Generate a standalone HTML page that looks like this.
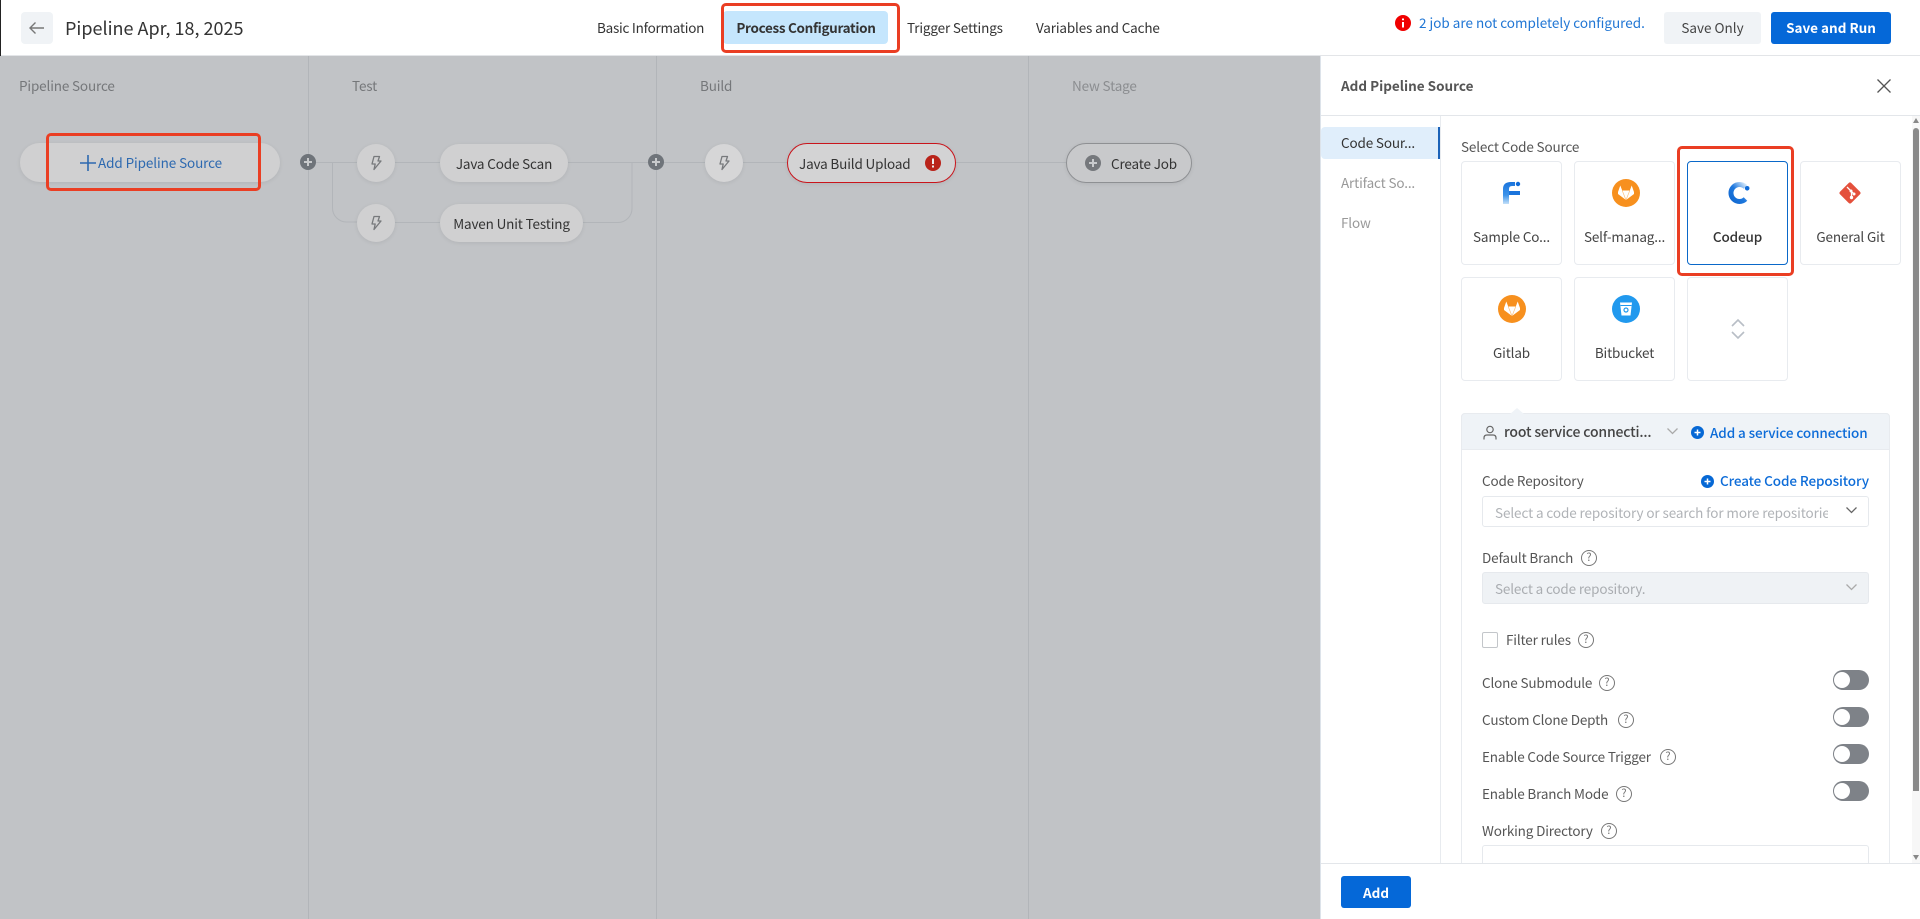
<!DOCTYPE html>
<html><head><meta charset="utf-8">
<style>
*{box-sizing:border-box}
html,body{margin:0;padding:0;width:1920px;height:919px;overflow:hidden;background:#c1c3c6;font-family:"Noto Sans CJK SC","Liberation Sans",sans-serif;font-size:13.5px;letter-spacing:-.15px;color:#333}
.a{position:absolute}
.t{position:absolute;white-space:nowrap;line-height:20px;height:20px;margin-top:-1px}
.b{font-weight:700;letter-spacing:0}
.pill{position:absolute;background:#d0d0d1;border-radius:20px;box-shadow:0 1px 4px rgba(0,0,0,.08)}
.card{position:absolute;width:101px;height:104px;border:1px solid #e8ebef;border-radius:4px;background:#fff}
.lbl{position:absolute;left:0;right:0;text-align:center;color:#444;line-height:20px;white-space:nowrap}
.red{position:absolute;border:3px solid #ea3e23;border-radius:5px}
.tog{position:absolute;left:1833px;width:36px;height:20px;border-radius:10px;background:#7e8288}
.tog:after{content:"";position:absolute;left:1px;top:2px;width:16px;height:16px;border-radius:50%;background:#fff}
svg{position:absolute;overflow:visible}
.hp{position:absolute;width:16px;height:16px;border:1.4px solid #777;border-radius:50%;color:#777;font-size:11px;line-height:13px;text-align:center;letter-spacing:0}
</style></head><body>

<!-- canvas lines -->
<svg class="a" style="left:0;top:0" width="1320" height="919" fill="none" stroke="#b2b5b9" stroke-width="1">
<path d="M308.5 56V919M656.5 56V919M1028.5 56V919"/>
<path d="M316 162.5H357M395 162.5H440M568 162.5H648M664 162.5H705M743 162.5H787M955 162.5H1067"/>
<path d="M332.5 162V208a14 14 0 0 0 14 14H357M395 222.5H440M582 222.5H618a14 14 0 0 0 14-14V162"/>
</svg>

<!-- stage labels -->
<div class="t" style="left:19px;top:76px;color:#75777a">Pipeline Source</div>
<div class="t" style="left:352px;top:76px;color:#75777a">Test</div>
<div class="t" style="left:700px;top:76px;color:#75777a">Build</div>
<div class="t" style="left:1072px;top:76px;color:#8b8d90">New Stage</div>

<!-- add pipeline source -->
<div class="pill" style="left:20px;top:143px;width:260px;height:39px"></div>
<svg style="left:80px;top:155px" width="16" height="16" fill="none" stroke="#2d69b0" stroke-width="1.6"><path d="M0 8H16M8 0V16"/></svg>
<div class="t" style="left:98px;top:153px;color:#2d69b0;letter-spacing:-.1px">Add Pipeline Source</div>
<div class="red" style="left:46px;top:133px;width:215px;height:58px"></div>

<!-- plus nodes -->
<svg style="left:300px;top:154px" width="16" height="16"><circle cx="8" cy="8" r="8" fill="#6f747a"/><path d="M4 8H12M8 4V12" stroke="#c8cacc" stroke-width="2"/></svg>
<svg style="left:648px;top:154px" width="16" height="16"><circle cx="8" cy="8" r="8" fill="#6f747a"/><path d="M4 8H12M8 4V12" stroke="#c8cacc" stroke-width="2"/></svg>

<!-- lightning nodes -->
<div class="pill" style="left:357px;top:144px;width:38px;height:38px"></div>
<svg style="left:368px;top:155px" width="16" height="16" fill="none" stroke="#77797c" stroke-width="1.3"><path d="M6 1.5H11.5L10 6H13L6 14.5L7.2 9H4Z" stroke-linejoin="round"/></svg>
<div class="pill" style="left:357px;top:204px;width:38px;height:38px"></div>
<svg style="left:368px;top:215px" width="16" height="16" fill="none" stroke="#77797c" stroke-width="1.3"><path d="M6 1.5H11.5L10 6H13L6 14.5L7.2 9H4Z" stroke-linejoin="round"/></svg>
<div class="pill" style="left:705px;top:144px;width:38px;height:38px;background:#d6d6d7"></div>
<svg style="left:716px;top:155px" width="16" height="16" fill="none" stroke="#77797c" stroke-width="1.3"><path d="M6 1.5H11.5L10 6H13L6 14.5L7.2 9H4Z" stroke-linejoin="round"/></svg>

<!-- job pills -->
<div class="pill" style="left:440px;top:144px;width:128px;height:38px"></div>
<div class="t" style="left:440px;width:128px;text-align:center;top:154px">Java Code Scan</div>
<div class="pill" style="left:440px;top:204px;width:143px;height:38px"></div>
<div class="t" style="left:440px;width:143px;text-align:center;top:214px">Maven Unit Testing</div>
<div class="pill" style="left:787px;top:143px;width:169px;height:40px;border:1px solid #c9141b;background:#d3d3d4"></div>
<div class="t" style="left:799px;top:154px">Java Build Upload</div>
<svg style="left:925px;top:155px" width="16" height="16"><circle cx="8" cy="8" r="8" fill="#b9231a"/><path d="M8 3.5V9" stroke="#eee" stroke-width="2"/><path d="M8 10.5V12.5" stroke="#eee" stroke-width="2"/></svg>
<div class="pill" style="left:1066px;top:143px;width:126px;height:40px;border:1px solid #8e9093;background:#c8c9cb"></div>
<svg style="left:1085px;top:155px" width="16" height="16"><circle cx="8" cy="8" r="8" fill="#75787c"/><path d="M4 8H12M8 4V12" stroke="#c8cacc" stroke-width="2"/></svg>
<div class="t" style="left:1111px;top:154px">Create Job</div>

<!-- header -->
<div class="a" style="left:0;top:0;width:1920px;height:56px;background:#fff;border-bottom:1px solid #e3e5e8"></div>
<div class="a" style="left:0;top:0;width:1px;height:56px;background:#222"></div>
<div class="a" style="left:21px;top:12px;width:32px;height:32px;background:#f0f3f6;border-radius:4px"></div>
<svg style="left:29px;top:20px" width="16" height="16" fill="none" stroke="#777" stroke-width="1.4"><path d="M1 8H15M6.5 2.5L1 8L6.5 13.5"/></svg>
<div class="t" style="left:65px;top:15px;height:26px;line-height:26px;font-size:18px;letter-spacing:0;color:#333;margin-top:0">Pipeline Apr, 18, 2025</div>

<div class="t" style="left:597px;top:18px;letter-spacing:-.25px">Basic Information</div>
<div class="a" style="left:723px;top:11px;width:165px;height:33px;background:#c5e6fd;border-radius:4px"></div>
<div class="t b" style="left:724px;width:164px;text-align:center;top:18px;letter-spacing:-.32px;color:#333">Process Configuration</div>
<div class="red" style="left:721px;top:3px;width:179px;height:50px"></div>
<div class="t" style="left:907px;top:18px">Trigger Settings</div>
<div class="t" style="left:1036px;top:18px">Variables and Cache</div>

<svg style="left:1395px;top:15px" width="16" height="16"><circle cx="8" cy="8" r="8" fill="#f00000"/><path d="M8 3.5V5.3M8 7V12.5" stroke="#fff" stroke-width="2"/></svg>
<div class="t" style="left:1419px;top:13px;color:#2076d4;letter-spacing:0">2 job are not completely configured.</div>
<div class="a" style="left:1664px;top:12px;width:97px;height:32px;background:#f0f3f6;border-radius:3px"></div>
<div class="t" style="left:1664px;width:97px;text-align:center;top:18px;color:#444;letter-spacing:0">Save Only</div>
<div class="a" style="left:1771px;top:12px;width:120px;height:32px;background:#0568d8;border-radius:3px"></div>
<div class="t b" style="left:1771px;width:120px;text-align:center;top:18px;color:#fff">Save and Run</div>

<!-- side panel -->
<div class="a" style="left:1320px;top:56px;width:600px;height:863px;background:#fff;border-left:1px solid #dde3ea"></div>
<div class="t b" style="left:1341px;top:76px;color:#555">Add Pipeline Source</div>
<svg style="left:1877px;top:79px" width="14" height="14" fill="none" stroke="#555" stroke-width="1.3"><path d="M0.5 0.5L13.5 13.5M13.5 0.5L0.5 13.5"/></svg>
<div class="a" style="left:1321px;top:115px;width:599px;height:1px;background:#e3e6ea"></div>
<div class="a" style="left:1440px;top:116px;width:1px;height:748px;background:#e8ebef"></div>

<div class="a" style="left:1321px;top:127px;width:119px;height:32px;background:#e0eefb;border-right:2px solid #1b62b8;border-radius:4px 0 0 4px"></div>
<div class="t" style="left:1341px;top:133px;color:#333">Code Sour...</div>
<div class="t" style="left:1341px;top:173px;color:#999">Artifact So...</div>
<div class="t" style="left:1341px;top:213px;color:#999">Flow</div>

<div class="t" style="left:1461px;top:137px;color:#555">Select Code Source</div>

<div class="card" style="left:1461px;top:161px"><div class="lbl" style="top:64px">Sample Co...</div></div>
<div class="card" style="left:1574px;top:161px"><div class="lbl" style="top:64px">Self-manag...</div></div>
<div class="card" style="left:1687px;top:161px;border-color:#0a68c9"><div class="lbl" style="top:64px;font-weight:500;color:#333">Codeup</div></div>
<div class="card" style="left:1800px;top:161px"><div class="lbl" style="top:64px">General Git</div></div>
<div class="card" style="left:1461px;top:277px"><div class="lbl" style="top:64px">Gitlab</div></div>
<div class="card" style="left:1574px;top:277px"><div class="lbl" style="top:64px">Bitbucket</div></div>
<div class="card" style="left:1687px;top:277px"></div>
<div class="red" style="left:1677px;top:146px;width:117px;height:130px"></div>

<!-- F logo -->
<svg style="left:1502px;top:181px" width="20" height="24"><defs><linearGradient id="f" x1="0" y1="0" x2="0" y2="1"><stop offset="0" stop-color="#1a74dc"/><stop offset=".6" stop-color="#3d93ea"/><stop offset="1" stop-color="#c4e0f8"/></linearGradient></defs><path d="M1 23V8Q1 1 9 1H13V5H10Q7 5 7 8V23Z" fill="url(#f)"/><path d="M7 10H18V14H7Z" fill="#1a74dc"/><circle cx="16" cy="3" r="2.2" fill="#0f6bd8"/></svg>
<!-- gitlab self -->
<svg style="left:1612px;top:179px" width="28" height="28"><circle cx="14" cy="14" r="14" fill="#f7901e"/><path d="M6 13L8.300 6.500L10.200 11.500H17.800L19.700 6.500L22 13V15L14 21L6 15Z" fill="#fff"/><path d="M10.200 11.500L14 21L17.800 11.500" stroke="#f7901e" stroke-width=".7" fill="none" opacity=".55"/></svg>
<!-- codeup -->
<svg style="left:1727.5px;top:181px" width="24" height="24" fill="none"><defs><linearGradient id="c" x1="1" y1="0" x2="0" y2="1"><stop offset="0" stop-color="#cfe5fa"/><stop offset=".5" stop-color="#1e78de"/><stop offset="1" stop-color="#1168d0"/></linearGradient></defs><path d="M17.500 6A8.500 8.500 0 1 0 17.500 18" stroke="url(#c)" stroke-width="5"/><circle cx="19.200" cy="7.300" r="2.300" fill="#0f6bd8"/></svg>
<!-- git -->
<svg style="left:1838px;top:181px" width="24" height="24"><rect x="4" y="4" width="16" height="16" rx="2" transform="rotate(45 12 12)" fill="#e4503c"/><path d="M9 6L13.500 10.500V16M13.500 10.500L16 13" stroke="#fff" stroke-width="1.3" fill="none"/><circle cx="13.500" cy="16.500" r="1.700" fill="#fff"/><circle cx="16" cy="13" r="1.500" fill="#fff"/><circle cx="13" cy="10" r="1.500" fill="#fff"/></svg>
<!-- gitlab -->
<svg style="left:1498px;top:295px" width="28" height="28"><circle cx="14" cy="14" r="14" fill="#f7901e"/><path d="M6 13L8.300 6.500L10.200 11.500H17.800L19.700 6.500L22 13V15L14 21L6 15Z" fill="#fff"/><path d="M10.200 11.500L14 21L17.800 11.500" stroke="#f7901e" stroke-width=".7" fill="none" opacity=".55"/></svg>
<!-- bitbucket -->
<svg style="left:1612px;top:295px" width="28" height="28"><circle cx="14" cy="14" r="14" fill="#2199ee"/><path d="M8 7.500H20L18.500 20.500H9.500Z" fill="#fff"/><path d="M8.500 10.500H19.500" stroke="#2199ee" stroke-width="1"/><circle cx="14" cy="15" r="2" fill="none" stroke="#2199ee" stroke-width="1.200"/></svg>
<!-- double chevron -->
<svg style="left:1731px;top:319px" width="14" height="20" fill="none" stroke="#b8bec6" stroke-width="1.600"><path d="M1 7L7 1L13 7M1 13L7 19L13 13"/></svg>

<!-- connection box -->
<div class="a" style="left:1461px;top:413px;width:429px;height:460px;border:1px solid #e8ebef;border-radius:4px 4px 0 0"></div>
<div class="a" style="left:1461px;top:413px;width:429px;height:37px;background:#eff3f7;border:1px solid #e8ebef;border-radius:4px 4px 0 0"></div>
<svg style="left:1510px;top:408px" width="14" height="6"><path d="M0 6L7 0L14 6Z" fill="#eff3f7"/></svg>
<svg style="left:1483px;top:425px" width="14" height="15" fill="none" stroke="#666" stroke-width="1.200"><circle cx="7" cy="4.500" r="3.200"/><path d="M1 14.500V13Q1 10 4 10H10Q13 10 13 13V14.500"/></svg>
<div class="t" style="left:1504px;top:422px;font-weight:500;font-size:14px;letter-spacing:-.17px;color:#444;margin-top:0">root service connecti...</div>
<svg style="left:1667px;top:428px" width="11" height="7" fill="none" stroke="#aaa" stroke-width="1.300"><path d="M0.500 0.500L5.500 5.500L10.500 0.500"/></svg>
<svg style="left:1691px;top:426px" width="13" height="13"><circle cx="6.500" cy="6.500" r="6.500" fill="#0668d5"/><path d="M3.500 6.500H9.500M6.500 3.500V9.500" stroke="#fff" stroke-width="1.500"/></svg>
<div class="t" style="left:1710px;top:423px;color:#0d6cd8;font-weight:500;letter-spacing:-.1px">Add a service connection</div>

<div class="t" style="left:1482px;top:471px;color:#555">Code Repository</div>
<svg style="left:1701px;top:475px" width="13" height="13"><circle cx="6.500" cy="6.500" r="6.500" fill="#0668d5"/><path d="M3.500 6.500H9.500M6.500 3.500V9.500" stroke="#fff" stroke-width="1.500"/></svg>
<div class="t" style="left:1720px;top:471px;color:#0d6cd8;font-weight:500;letter-spacing:-.1px">Create Code Repository</div>
<div class="a" style="left:1482px;top:496px;width:387px;height:31px;border:1px solid #e6e9ed;border-radius:3px"></div>
<div class="t" style="left:1495px;top:503px;width:333px;overflow:hidden;color:#b0b3b7;letter-spacing:-.1px">Select a code repository or search for more repositories</div>
<svg style="left:1846px;top:507px" width="11" height="7" fill="none" stroke="#666" stroke-width="1.300"><path d="M0.500 0.500L5.500 5.500L10.500 0.500"/></svg>

<div class="t" style="left:1482px;top:548px;color:#555">Default Branch</div>
<div class="hp" style="left:1581px;top:550px">?</div>
<div class="a" style="left:1482px;top:572px;width:387px;height:32px;background:#eff2f5;border:1px solid #e6e9ed;border-radius:3px"></div>
<div class="t" style="left:1495px;top:579px;color:#aaadb1">Select a code repository.</div>
<svg style="left:1846px;top:584px" width="11" height="7" fill="none" stroke="#aaa" stroke-width="1.300"><path d="M0.500 0.500L5.500 5.500L10.500 0.500"/></svg>

<div class="a" style="left:1482px;top:632px;width:16px;height:16px;border:1px solid #c3c6ca;border-radius:2px"></div>
<div class="t" style="left:1506px;top:630px;color:#555">Filter rules</div>
<div class="hp" style="left:1578px;top:632px">?</div>

<div class="t" style="left:1482px;top:673px;color:#555">Clone Submodule</div>
<div class="hp" style="left:1599px;top:675px">?</div>
<div class="tog" style="top:670px"></div>
<div class="t" style="left:1482px;top:710px;color:#555">Custom Clone Depth</div>
<div class="hp" style="left:1618px;top:712px">?</div>
<div class="tog" style="top:707px"></div>
<div class="t" style="left:1482px;top:747px;color:#555">Enable Code Source Trigger</div>
<div class="hp" style="left:1660px;top:749px">?</div>
<div class="tog" style="top:744px"></div>
<div class="t" style="left:1482px;top:784px;color:#555">Enable Branch Mode</div>
<div class="hp" style="left:1616px;top:786px">?</div>
<div class="tog" style="top:781px"></div>
<div class="t" style="left:1482px;top:821px;color:#555">Working Directory</div>
<div class="hp" style="left:1601px;top:823px">?</div>
<div class="a" style="left:1482px;top:845px;width:387px;height:30px;border:1px solid #e6e9ed;border-radius:3px"></div>

<!-- scrollbar -->
<div class="a" style="left:1912px;top:116px;width:8px;height:748px;background:#f7f7f7"></div>
<div class="a" style="left:1913px;top:128px;width:6px;height:663px;background:#8a8a8a;border-radius:3px 3px 0 0"></div>
<svg style="left:1913px;top:118px" width="6" height="5"><path d="M0 5L3 0L6 5Z" fill="#888"/></svg>
<svg style="left:1913px;top:855px" width="6" height="5"><path d="M0 0L3 5L6 0Z" fill="#888"/></svg>

<!-- footer -->
<div class="a" style="left:1321px;top:863px;width:599px;height:56px;background:#fff;border-top:1px solid #e3e6ea"></div>
<div class="a" style="left:1341px;top:876px;width:70px;height:32px;background:#0568d8;border-radius:3px"></div>
<div class="t b" style="left:1341px;width:70px;text-align:center;top:883px;color:#fff">Add</div>
</body></html>
